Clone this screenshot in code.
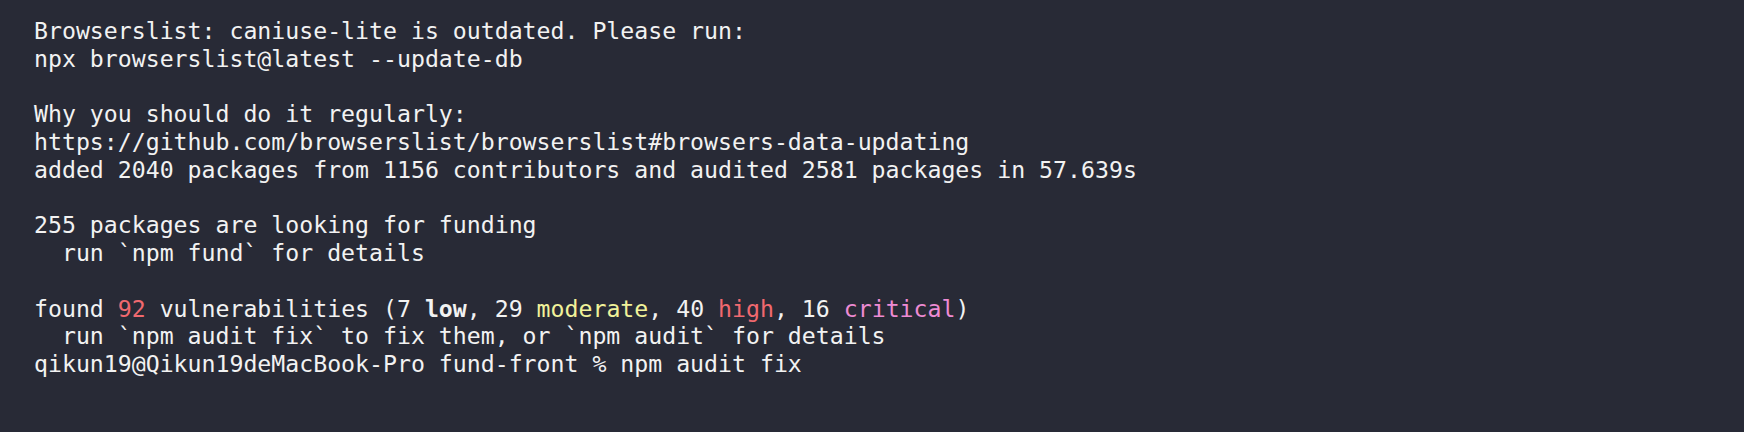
export default function App() {
  return (
    <div className="w-[1744px] h-[432px] bg-[#282a36] text-[#f2f2f2] font-['DejaVu_Sans_Mono',monospace] text-[23.2px] leading-[27.75px] pt-[17px] pl-[34px] whitespace-pre overflow-hidden">
      <div>Browserslist: caniuse-lite is outdated. Please run:</div>
      <div>npx browserslist@latest --update-db</div>
      <div>&nbsp;</div>
      <div>Why you should do it regularly:</div>
      <div>https://github.com/browserslist/browserslist#browsers-data-updating</div>
      <div>added 2040 packages from 1156 contributors and audited 2581 packages in 57.639s</div>
      <div>&nbsp;</div>
      <div>255 packages are looking for funding</div>
      <div>{"  run `npm fund` for details"}</div>
      <div>&nbsp;</div>
      <div>
        found <span className="text-[#f0696f]">92</span> vulnerabilities (7{" "}
        <b className="font-bold">low</b>, 29{" "}
        <span className="text-[#f1f29a]">moderate</span>, 40{" "}
        <span className="text-[#f0696f]">high</span>, 16{" "}
        <span className="text-[#ee8bd3]">critical</span>)
      </div>
      <div>{"  run `npm audit fix` to fix them, or `npm audit` for details"}</div>
      <div>qikun19@Qikun19deMacBook-Pro fund-front % npm audit fix</div>
    </div>
  );
}
